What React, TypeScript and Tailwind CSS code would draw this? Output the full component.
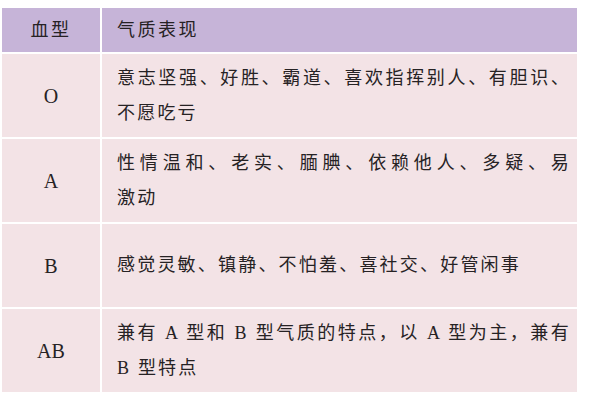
import React from "react";

const font = { fontFamily: '"Liberation Serif", "Noto Sans CJK SC", serif' };

type Row = { type: string; lines: string[] };

const rows: Row[] = [
  { type: "O", lines: ["意志坚强、好胜、霸道、喜欢指挥别人、有胆识、", "不愿吃亏"] },
  { type: "A", lines: ["性情温和、老实、腼腆、依赖他人、多疑、易", "激动"] },
  { type: "B", lines: ["感觉灵敏、镇静、不怕羞、喜社交、好管闲事"] },
  { type: "AB", lines: ["兼有 A 型和 B 型气质的特点，以 A 型为主，兼有", "B 型特点"] },
];

export default function App() {
  return (
    <div className="w-[600px] h-[400px] bg-white overflow-hidden pt-[8px] pl-[2px]" style={font}>
      <div className="w-[575px] grid grid-cols-[98px_minmax(0,1fr)] gap-[2px] bg-white text-[#262224]">
        <div className="h-[44px] bg-[#c6b4d8] flex items-center justify-center text-[18px] tracking-[2.5px]">血型</div>
        <div className="h-[44px] bg-[#c6b4d8] flex items-center pl-[15px] text-[18px] tracking-[2.5px]">气质表现</div>
        {rows.map((r) => (
          <React.Fragment key={r.type}>
            <div className="h-[83px] bg-[#f3e3e6] flex items-center justify-center text-[20px]">{r.type}</div>
            <div className="h-[83px] bg-[#f3e3e6] flex flex-col justify-center pl-[15px] pr-[8px] text-[18px] leading-[35px] tracking-[2.2px] overflow-hidden">
              {r.lines.map((l, i) => (
                <div
                  key={i}
                  className={
                    r.lines.length > 1 && i === 0
                      ? "whitespace-nowrap text-justify [text-align-last:justify] -mr-[2px]"
                      : "whitespace-nowrap"
                  }
                >
                  {l}
                </div>
              ))}
            </div>
          </React.Fragment>
        ))}
      </div>
    </div>
  );
}
